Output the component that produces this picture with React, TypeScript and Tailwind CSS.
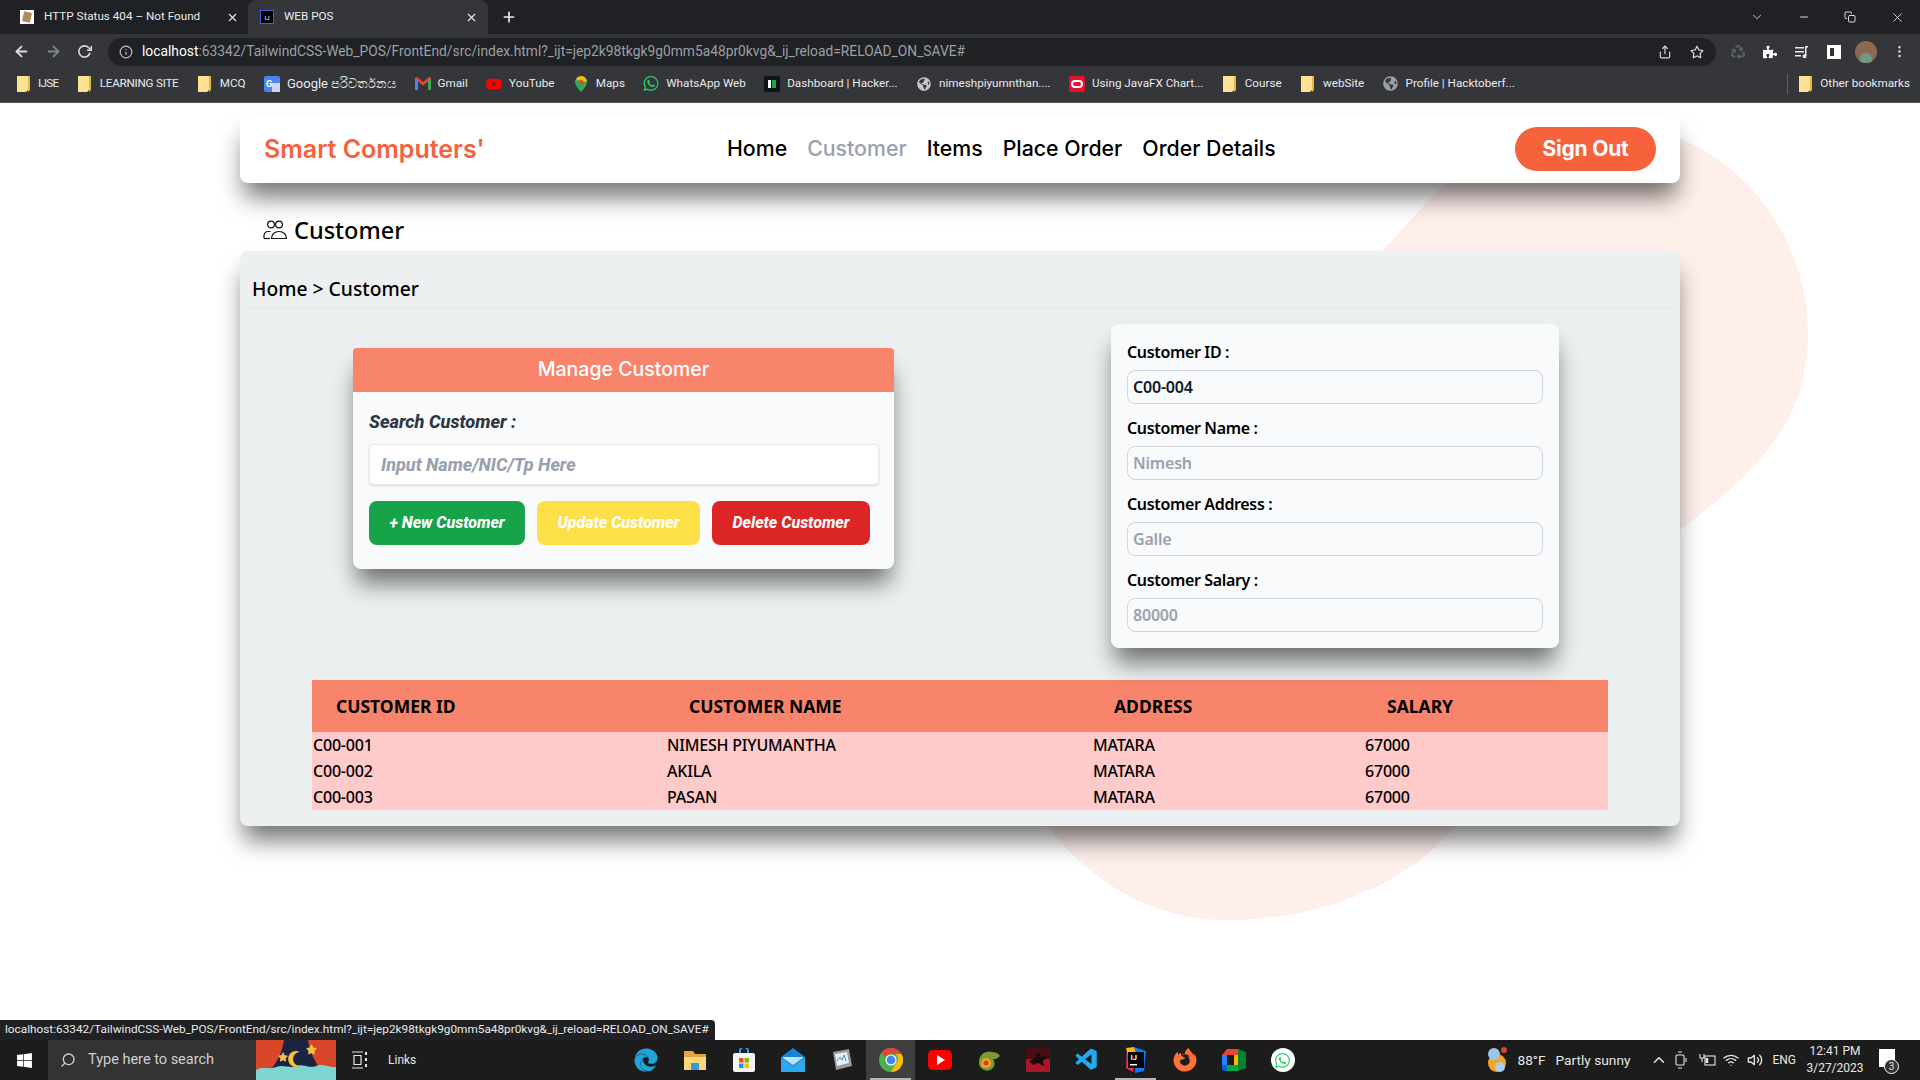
import type { ReactNode } from "react";
import {
  FaWhatsapp,
  FaYoutube,
  FaEdge,
  FaFirefoxBrowser,
  FaWindows,
  FaPuzzlePiece,
  FaStar,
  FaRegStar,
  FaGlobeAmericas,
  FaRecycle,
} from "react-icons/fa";
import { VscVscode } from "react-icons/vsc";
import {
  FiArrowLeft,
  FiArrowRight,
  FiRotateCw,
  FiInfo,
  FiShare,
  FiSearch,
  FiChevronUp,
  FiChevronDown,
  FiMinus,
  FiX,
  FiPlus,
  FiMoreVertical,
  FiWifi,
  FiVolume2,
  FiCopy,
} from "react-icons/fi";

const poppins = "font-['Inter','Noto_Sans',sans-serif]";
const ubuntu = "font-['Noto_Sans','Open_Sans',sans-serif]";
const chromeFont = "font-['Roboto','Liberation_Sans',sans-serif]";
const cardShadow = "shadow-[0_18px_25px_-4px_rgba(0,0,0,0.55)]";

function Folder() {
  return (
    <svg width="13" height="16" viewBox="0 0 13 16" className="shrink-0">
      <path d="M0 0h9l0 0h2v14l-2 2H0z" fill="#fde293" />
      <path d="M11 0h2v14l-2 2z" fill="#e8b93c" />
    </svg>
  );
}

function ChromeLogo({ size = 22 }: { size?: number }) {
  return (
    <svg width={size} height={size} viewBox="0 0 24 24">
      <circle cx="12" cy="12" r="12" fill="#4caf50" />
      <path d="M12 0a12 12 0 0 1 10.4 6H12a6 6 0 0 0-5.6 3.8L2.6 4.4A12 12 0 0 1 12 0z" fill="#ea4335" />
      <path d="M22.4 6A12 12 0 0 1 12 24l5.2-9a6 6 0 0 0-.4-9z" fill="#fbbc05" />
      <circle cx="12" cy="12" r="5.6" fill="#fff" />
      <circle cx="12" cy="12" r="4.4" fill="#4285f4" />
    </svg>
  );
}

function Bookmark({ icon, label, labelClass }: { icon: ReactNode; label: string; labelClass?: string }) {
  return (
    <div className="flex items-center gap-[7px] whitespace-nowrap">
      <span className="flex w-[16px] h-[16px] items-center justify-center shrink-0">{icon}</span>
      <span className={labelClass}>{label}</span>
    </div>
  );
}

const bookmarks: { icon: ReactNode; label: string; labelClass?: string }[] = [
  { icon: <Folder />, label: "IJSE", labelClass: "tracking-[-0.7px]" },
  { icon: <Folder />, label: "LEARNING SITE", labelClass: "tracking-[-0.25px]" },
  { icon: <Folder />, label: "MCQ" },
  {
    icon: (
      <svg width="16" height="16" viewBox="0 0 16 16">
        <rect width="16" height="16" rx="2" fill="#4a86e8" />
        <rect x="8" y="7" width="8" height="9" fill="#c9d7ee" />
        <text x="2" y="11" fontSize="9" fill="#fff" fontWeight="700">G</text>
      </svg>
    ),
    label: "Google පරිවර්තනය",
    labelClass: "text-[13px]",
  },
  {
    icon: (
      <svg width="16" height="13" viewBox="0 0 16 13">
        <path d="M0 1l2-1 6 5 6-5 2 1v12h-3V4.5L8 8.5 3 4.5V13H0z" fill="#ea4335" />
        <path d="M0 1v12h3V4z" fill="#4285f4" />
        <path d="M16 1v12h-3V4z" fill="#34a853" />
      </svg>
    ),
    label: "Gmail",
  },
  { icon: <FaYoutube size={16} color="#ff0000" />, label: "YouTube" },
  {
    icon: (
      <svg width="12" height="16" viewBox="0 0 12 16">
        <path d="M6 0a6 6 0 0 1 6 6c0 4-6 10-6 10S0 10 0 6a6 6 0 0 1 6-6z" fill="#34a853" />
        <path d="M6 0a6 6 0 0 1 6 6L1 4a6 6 0 0 1 5-4z" fill="#fbbc05" />
        <circle cx="6" cy="6" r="2.2" fill="#ea4335" />
      </svg>
    ),
    label: "Maps",
  },
  { icon: <FaWhatsapp size={17} color="#25d366" />, label: "WhatsApp Web" },
  {
    icon: (
      <span className="flex w-[16px] h-[16px] items-center justify-center gap-[1px] bg-[#0e141e] rounded-[2px]">
        <span className="w-[3px] h-[8px] bg-white" />
        <span className="w-[4px] h-[8px] bg-[#1ba94c]" />
      </span>
    ),
    label: "Dashboard | Hacker...",
  },
  { icon: <FaGlobeAmericas size={14} color="#c4c7c5" />, label: "nimeshpiyumnthan...." },
  {
    icon: (
      <span className="flex w-[16px] h-[16px] items-center justify-center bg-[#e8112d] rounded-[2px]">
        <span className="w-[12px] h-[8px] border-2 border-white rounded-[4px]" />
      </span>
    ),
    label: "Using JavaFX Chart...",
  },
  { icon: <Folder />, label: "Course" },
  { icon: <Folder />, label: "webSite" },
  { icon: <FaGlobeAmericas size={15} color="#9aa0a6" />, label: "Profile | Hacktoberf..." },
];

function Field({ label, value, dark }: { label: string; value: string; dark?: boolean }) {
  return (
    <div className="flex flex-col">
      <label className={`${ubuntu} text-[16px] leading-[24px] font-semibold tracking-[-0.35px] text-black`}>{label}</label>
      <input
        readOnly={dark}
        defaultValue={dark ? value : undefined}
        placeholder={dark ? undefined : value}
        className={`${ubuntu} mt-[6px] h-[34px] w-full rounded-lg border border-gray-300 bg-transparent px-[5px] text-[16px] font-semibold tracking-[-0.2px] text-gray-900 placeholder:text-gray-400 outline-none`}
      />
    </div>
  );
}

const rows = [
  ["C00-001", "NIMESH PIYUMANTHA", "MATARA", "67000"],
  ["C00-002", "AKILA", "MATARA", "67000"],
  ["C00-003", "PASAN", "MATARA", "67000"],
];

function TaskIcon({ children, active, open }: { children: ReactNode; active?: boolean; open?: boolean }) {
  return (
    <div className={`relative flex w-[49px] h-[40px] items-center justify-center ${active ? "bg-[#3f3f3f]" : ""}`}>
      {children}
      {(active || open) && <span className="absolute bottom-0 left-[4px] right-[4px] h-[2px] bg-[#b5b5b5]" />}
    </div>
  );
}

export default function App() {
  return (
    <div className="flex h-screen w-full flex-col overflow-hidden bg-white">
      {/* Tab strip */}
      <div className={`${chromeFont} flex h-[34px] items-end bg-[#202124] text-[11.7px] text-[#e8eaed]`}>
        <div className="flex h-[34px] w-[248px] items-center pl-[20px] pr-[9px]">
          <span className="flex h-[14px] w-[14px] items-center justify-center bg-white shrink-0">
            <span className="h-[10px] w-[8px] rotate-12 bg-[#b08a58]" />
          </span>
          <span className="ml-[10px] flex-1 whitespace-nowrap">HTTP Status 404 – Not Found</span>
          <FiX size={13} />
        </div>
        <div className="flex h-[34px] w-[240px] items-center rounded-t-lg bg-[#35363a] pl-[12px] pr-[10px]">
          <span className="flex h-[14px] w-[14px] items-center justify-center bg-black border border-[#4a5ce0] shrink-0 text-[6px] text-white">IJ</span>
          <span className="ml-[10px] flex-1">WEB POS</span>
          <FiX size={13} />
        </div>
        <div className="flex h-[34px] items-center pl-[13px]">
          <FiPlus size={16} strokeWidth={2.5} />
        </div>
        <div className="ml-auto flex h-[34px] items-center gap-[34px] pr-[15px] text-[#dadce0]">
          <FiChevronDown size={14} strokeWidth={1.5} />
          <FiMinus size={12} />
          <FiCopy size={12} />
          <FiX size={15} strokeWidth={1.5} />
        </div>
      </div>

      {/* Address bar */}
      <div className="flex h-[35px] items-center bg-[#35363a] text-[#dadce0]">
        <div className="flex w-[108px] items-center gap-[15px] pl-[13px]">
          <FiArrowLeft size={17} strokeWidth={2.5} />
          <FiArrowRight size={17} strokeWidth={2.5} className="text-[#80868b]" />
          <FiRotateCw size={15} strokeWidth={2.5} />
        </div>
        <div className={`${chromeFont} flex h-[28px] w-[1608px] items-center rounded-full bg-[#202124] pl-[11px] pr-[12px] text-[13.8px]`}>
          <FiInfo size={14} className="text-[#bdc1c6]" />
          <span className="ml-[9px] whitespace-nowrap">
            <span className="text-white">localhost</span>
            <span className="text-[#9aa0a6]">:63342/TailwindCSS-Web_POS/FrontEnd/src/index.html?_ijt=jep2k98tkgk9g0mm5a48pr0kvg&amp;_ij_reload=RELOAD_ON_SAVE#</span>
          </span>
          <div className="ml-auto flex items-center gap-[18px]">
            <FiShare size={14} />
            <FaRegStar size={14} />
          </div>
        </div>
        <div className="ml-[15px] flex items-center gap-[18px]">
          <FaRecycle size={14} className="text-[#5f6368]" />
          <FaPuzzlePiece size={14} className="text-white" />
          <svg width="14" height="14" viewBox="0 0 14 14" fill="#e8eaed">
            <path d="M0 2h9v1.5H0zM0 6h9v1.5H0zM0 10h6v1.5H0zM10 1h3v1.5h-1.5V11a2 2 0 1 1-1.5-1.7z" />
          </svg>
          <span className="h-[14px] w-[14px] border-[3px] border-white border-r-[7px]" />
          <span className="-ml-[4px] flex h-[22px] w-[22px] items-end justify-center overflow-hidden rounded-full bg-[#8a6a52]">
            <span className="h-[10px] w-[12px] rounded-t-full bg-[#6f9a82]" />
          </span>
          <FiMoreVertical size={15} className="-ml-[3px]" />
        </div>
      </div>

      {/* Bookmarks */}
      <div className={`${chromeFont} flex h-[34px] items-center border-b border-[#55565a] bg-[#35363a] pb-[3px] pl-[15px] pr-[10px] text-[11.7px] text-[#e8eaed]`}>
        <div className="flex items-center gap-[18.3px]">
          {bookmarks.map((b) => (
            <Bookmark key={b.label} icon={b.icon} label={b.label} labelClass={b.labelClass} />
          ))}
        </div>
        <div className="ml-auto flex items-center gap-[9px]">
          <span className="h-[20px] w-px bg-[#5f6368]" />
          <Bookmark icon={<Folder />} label="Other bookmarks" />
        </div>
      </div>

      {/* Page */}
      <main className="relative flex-1 overflow-hidden bg-white">
        <svg
          width="1920"
          height="937"
          viewBox="0 103 1920 937"
          className="absolute left-0 top-0"
        >
          <path
            d="M1374 260 L1441 187 C1490 145 1540 121 1591 121 C1720 121 1808 220 1808 335 C1808 420 1760 470 1680 530 C1560 640 1520 780 1420 860 C1360 905 1290 920 1224 920 C1150 920 1090 880 1047 826 C1000 760 1200 450 1374 260 Z"
            fill="#feefeb"
          />
        </svg>

        <div className="relative mx-auto w-[1440px] pt-[12px]">
          <nav className={`flex h-[68px] items-center rounded-lg bg-white pl-[24px] pr-[24px] ${cardShadow}`}>
            <span className={`${poppins} w-[463px] pt-[1px] text-[25px] font-semibold text-[#f5623c]`}>Smart Computers'</span>
            <ul className={`${poppins} flex gap-[20px] text-[21.3px] font-medium text-black`}>
              <li>Home</li>
              <li className="text-gray-400">Customer</li>
              <li>Items</li>
              <li>Place Order</li>
              <li>Order Details</li>
            </ul>
            <button className={`${poppins} ml-auto flex h-[44px] w-[141px] items-center justify-center rounded-full bg-[#f5623c] text-[21px] font-bold tracking-[-0.2px] text-white`}>
              Sign Out
            </button>
          </nav>

          <div className={`${ubuntu} flex h-[68px] items-end pb-[6px] pl-[23px] text-[23.5px] font-medium text-black`}>
            <svg width="25" height="20" viewBox="0 0 25 20" fill="none" stroke="#111" strokeWidth="1.2" className="mb-[5px] mr-[6px]">
              <circle cx="8" cy="4.5" r="3.4" />
              <circle cx="16" cy="4.5" r="3.4" />
              <path d="M1 18.5v-3a4 4 0 0 1 4-4h2.5" />
              <path d="M1 18.5h6" />
              <path d="M8.5 18.5c0-4 3-7 7.5-7s7.5 3 7.5 7z" />
            </svg>
            <span className="leading-[30px]">Customer</span>
          </div>

          <section className={`h-[575px] rounded-lg bg-[#ecf0f1] ${cardShadow}`}>
            <div className={`${ubuntu} mx-[6px] flex h-[57px] items-end border-b border-[#e4e8e9] pb-[3px] pl-[6px] text-[19.3px] font-medium text-black`}>
              Home &gt; Customer
            </div>

            <div className="flex items-start pl-[113px] pt-[16px]">
              <div className={`mt-[24px] h-[221px] w-[541px] rounded-lg bg-[#f9fafb] ${cardShadow}`}>
                <div className={`${poppins} flex h-[44px] items-center justify-center rounded-t-[4px] bg-[#f8856b] text-[19.5px] font-medium text-white`}>
                  Manage Customer
                </div>
                <div className="px-[16px] font-['Roboto',sans-serif] italic">
                  <p className="pt-[18px] text-[18.2px] font-extrabold leading-[24px] text-[#2f3542]">Search Customer :</p>
                  <input
                    placeholder="Input Name/NIC/Tp Here"
                    className="mt-[10px] h-[41px] w-[510px] rounded-[4px] border border-gray-200 bg-white px-[11px] text-[18px] font-extrabold shadow-sm outline-none placeholder:text-gray-400"
                  />
                  <div className="mt-[16px] flex gap-[12px] text-[16px] font-extrabold text-white">
                    <button className="h-[44px] w-[156px] rounded-lg bg-[#16a34a] italic">+ New Customer</button>
                    <button className="h-[44px] w-[163px] rounded-lg bg-[#fde047] italic">Update Customer</button>
                    <button className="h-[44px] w-[158px] rounded-lg bg-[#dc2626] italic">Delete Customer</button>
                  </div>
                </div>
              </div>

              <div className={`ml-[217px] flex h-[324px] w-[448px] flex-col gap-[12px] rounded-lg bg-[#f9fafb] px-[16px] pt-[16px] ${cardShadow}`}>
                <Field label="Customer ID :" value="C00-004" dark />
                <Field label="Customer Name :" value="Nimesh" />
                <Field label="Customer Address :" value="Galle" />
                <Field label="Customer Salary :" value="80000" />
              </div>
            </div>

            <div className="ml-[72px] mt-[32px] w-[1296px]">
              <table className={`${ubuntu} w-full table-fixed border-collapse text-left text-black`}>
                <colgroup>
                  <col className="w-[354px]" />
                  <col className="w-[426px]" />
                  <col className="w-[272px]" />
                  <col className="w-[244px]" />
                </colgroup>
                <thead className="bg-[#f8856b] text-[17.5px]">
                  <tr className="h-[52px]">
                    <th className="pl-[24px] pt-[1px] font-bold">CUSTOMER ID</th>
                    <th className="pl-[23px] pt-[1px] font-bold">CUSTOMER NAME</th>
                    <th className="pl-[22px] pt-[1px] font-bold">ADDRESS</th>
                    <th className="pl-[23px] pt-[1px] font-bold">SALARY</th>
                  </tr>
                </thead>
                <tbody className="bg-[#fecaca] text-[16px] font-medium tracking-[-0.2px]">
                  {rows.map((r) => (
                    <tr key={r[0]} className="h-[26px]">
                      {r.map((c, i) => (
                        <td key={i} className="pl-px leading-[26px]">
                          {c}
                        </td>
                      ))}
                    </tr>
                  ))}
                </tbody>
              </table>
            </div>
          </section>
        </div>

        {/* Link status bubble */}
        <div className={`${chromeFont} absolute bottom-0 left-0 flex h-[20px] items-center rounded-tr-[4px] bg-[#202124] pl-[5px] pr-[6px] text-[11.8px] text-[#e8eaed]`}>
          localhost:63342/TailwindCSS-Web_POS/FrontEnd/src/index.html?_ijt=jep2k98tkgk9g0mm5a48pr0kvg&amp;_ij_reload=RELOAD_ON_SAVE#
        </div>
      </main>

      {/* Taskbar */}
      <footer className={`${chromeFont} flex h-[40px] items-center bg-[#1c1c1c] text-[#e6e6e6]`}>
        <div className="flex w-[48px] justify-center">
          <FaWindows size={17} className="text-white" />
        </div>
        <div className="flex h-[40px] w-[208px] items-center gap-[12px] bg-[#333333] pl-[12px] text-[14.5px] text-[#cfcfcf]">
          <FiSearch size={16} className="-scale-x-100" />
          Type here to search
        </div>
        <svg width="80" height="40" viewBox="0 0 80 40">
          <rect width="80" height="40" fill="#1a2340" />
          <path d="M0 0h28c-2 14-8 24-14 30l-14 10z" fill="#d9472b" />
          <path d="M80 0H52c2 14 8 24 14 30l14 10z" fill="#d9472b" />
          <path d="M0 30c8-4 12 0 20-3s14 2 20-1 14 3 20 0 14 2 20 1v13H0z" fill="#7fd6d0" />
          <path d="M44 12a8 8 0 1 0 0 14 7 7 0 0 1 0-14z" fill="#f3c244" />
          <FaStar x="22" y="12" size={10} color="#f3c244" />
          <FaStar x="50" y="4" size={11} color="#f3c244" />
        </svg>
        <div className="ml-[15px] flex w-[37px] items-center">
          <svg width="18" height="18" viewBox="0 0 18 18" fill="none" stroke="#e6e6e6" strokeWidth="1.2">
            <path d="M1 1h11M1 17h11M3 4.5h7v9H3z" />
            <path d="M15 1v3M15 7v3M15 13v3" strokeWidth="2" />
          </svg>
        </div>
        <span className="w-[26px] text-[12px]">Links</span>
        <div className="ml-[207px] flex items-center">
          <TaskIcon><FaEdge size={24} color="#1fa3d8" /></TaskIcon>
          <TaskIcon>
            <svg width="24" height="22" viewBox="0 0 24 22">
              <path d="M1 2h9l2 3h11v4H1z" fill="#e8a33d" />
              <path d="M1 8h22v13H1z" fill="#f8d775" />
              <path d="M8 14h8v7H8z" fill="#3a96dd" />
            </svg>
          </TaskIcon>
          <TaskIcon>
            <svg width="22" height="24" viewBox="0 0 22 24">
              <path d="M7 6V3a4 4 0 0 1 8 0v3" fill="none" stroke="#3aa0e8" strokeWidth="2" />
              <rect y="5" width="22" height="19" rx="2" fill="#f4f4f4" />
              <rect x="6" y="10" width="4.5" height="4.5" fill="#f25022" />
              <rect x="11.5" y="10" width="4.5" height="4.5" fill="#7fba00" />
              <rect x="6" y="15.5" width="4.5" height="4.5" fill="#00a4ef" />
              <rect x="11.5" y="15.5" width="4.5" height="4.5" fill="#ffb900" />
            </svg>
          </TaskIcon>
          <TaskIcon>
            <svg width="24" height="24" viewBox="0 0 24 24">
              <path d="M0 9L12 0l12 9v15H0z" fill="#1683d8" />
              <path d="M2 9h20v1l-10 7-10-7z" fill="#bfe4fb" />
              <path d="M0 10l12 8 12-8v14H0z" fill="#2fa8ef" />
            </svg>
          </TaskIcon>
          <TaskIcon>
            <svg width="22" height="24" viewBox="0 0 22 24">
              <path d="M2 4l16-3 3 17-16 4z" fill="#9a9a9a" />
              <path d="M4 6l12-2 2 11-12 3z" fill="#e8eef4" />
              <path d="M6 13l3-4 2 3 2-5 2 6" fill="none" stroke="#4a90d9" strokeWidth="1" />
            </svg>
          </TaskIcon>
          <TaskIcon active><ChromeLogo size={24} /></TaskIcon>
          <TaskIcon>
            <span className="flex h-[20px] w-[24px] items-center justify-center rounded-[5px] bg-[#ff0000]">
              <span className="ml-[2px] h-0 w-0 border-y-[5px] border-l-[8px] border-y-transparent border-l-white" />
            </span>
          </TaskIcon>
          <TaskIcon>
            <svg width="24" height="24" viewBox="0 0 24 24">
              <path d="M2 14a10 10 0 0 1 13-10c3 0 6 1 8 4l-4 3h-3a7 7 0 0 1-3 11 8 8 0 0 1-11-8z" fill="#7a9a36" />
              <circle cx="9" cy="15" r="5" fill="#f2a51e" />
              <circle cx="9" cy="15" r="2.5" fill="#c9401e" />
            </svg>
          </TaskIcon>
          <TaskIcon>
            <svg width="24" height="24" viewBox="0 0 24 24">
              <rect width="24" height="24" fill="#a8162a" />
              <path d="M0 0h24v11H0z" fill="#4a0c14" />
              <path d="M3 13l6-3 3-6 3 4 6 1-4 4 1 5-6-3-5 2z" fill="#1a0a0a" />
            </svg>
          </TaskIcon>
          <TaskIcon><VscVscode size={26} color="#23a9f2" /></TaskIcon>
          <TaskIcon open>
            <svg width="24" height="26" viewBox="0 0 24 26">
              <path d="M3 1l9 2-3 22-7-4z" fill="#fe2857" />
              <path d="M10 0l12 4-2 20-9 2z" fill="#087cfa" />
              <path d="M2 1l8-1 2 6-8 3z" fill="#fdb60d" />
              <rect x="4" y="5" width="16" height="16" fill="#000" />
              <rect x="6" y="17" width="7" height="1.5" fill="#fff" />
              <text x="6.5" y="13" fontSize="7.5" fill="#fff" fontWeight="700">IJ</text>
            </svg>
          </TaskIcon>
          <TaskIcon><FaFirefoxBrowser size={24} color="#ff7139" /></TaskIcon>
          <TaskIcon>
            <svg width="24" height="22" viewBox="0 0 24 22">
              <path d="M5 0h11v6H6L0 6z" fill="#ea4335" />
              <path d="M0 6h5v10H0z" fill="#2684fc" />
              <path d="M0 16h5v6H3a3 3 0 0 1-3-3z" fill="#0066da" />
              <path d="M5 16h11v6H5z" fill="#00ac47" />
              <path d="M16 0v22l8 -3V3z" fill="#00832d" />
              <path d="M16 6h-4v10h4z" fill="#ffba00" />
            </svg>
          </TaskIcon>
          <TaskIcon>
            <span className="flex h-[24px] w-[24px] items-center justify-center rounded-full bg-white">
              <FaWhatsapp size={17} color="#25d366" />
            </span>
          </TaskIcon>
        </div>
        <div className="ml-auto flex items-center text-[13.7px]">
          <svg width="22" height="26" viewBox="0 0 22 26" className="mr-[10px]">
            <circle cx="12" cy="16" r="9" fill="#f5a623" />
            <circle cx="9" cy="7" r="6" fill="#9fc4ea" />
            <circle cx="15" cy="20" r="5" fill="#a6cdf0" />
            <circle cx="19" cy="3" r="3" fill="#d9472b" />
          </svg>
          <span className="whitespace-nowrap">88°F</span>
          <span className="ml-[10px] whitespace-nowrap">Partly sunny</span>
          <FiChevronUp size={18} className="ml-[20px]" />
          <svg width="14" height="18" viewBox="0 0 14 18" fill="none" stroke="#e6e6e6" strokeWidth="1.1" className="ml-[7px]">
            <rect x="1" y="4" width="8" height="10" rx="1" />
            <path d="M3 1h4M3 17h4M11 7v4" />
          </svg>
          <svg width="18" height="14" viewBox="0 0 18 14" fill="none" stroke="#e6e6e6" strokeWidth="1.1" className="ml-[9px]">
            <rect x="7" y="3" width="10" height="9" />
            <path d="M9 5v5" strokeWidth="2.5" />
            <path d="M2 1v4h4V1M4 5v4" />
          </svg>
          <FiWifi size={16} className="ml-[7px]" />
          <FiVolume2 size={16} className="ml-[8px]" />
          <span className="ml-[9px] text-[12px]">ENG</span>
          <div className="ml-[8px] flex w-[62px] flex-col items-center text-[12px] leading-[17px]">
            <span>12:41 PM</span>
            <span>3/27/2023</span>
          </div>
          <div className="relative ml-[13px] mr-[23px] h-[22px] w-[18px]">
            <div className="h-[18px] w-[16px] bg-white" />
            <span className="absolute -bottom-[3px] -right-[2px] flex h-[15px] w-[15px] items-center justify-center rounded-full border border-white bg-[#333] text-[10px]">3</span>
          </div>
        </div>
      </footer>
    </div>
  );
}
